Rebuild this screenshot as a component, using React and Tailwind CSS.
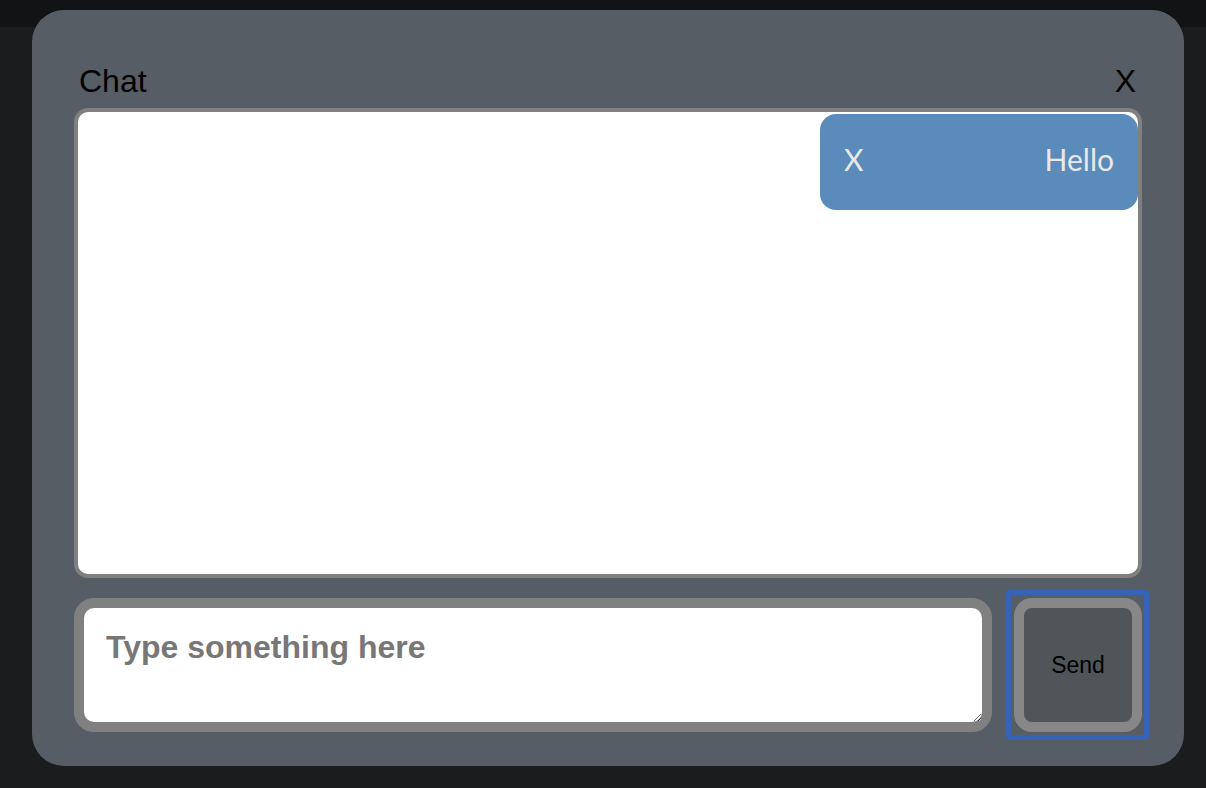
import { useState } from "react";

const Bubble = ({ text }) => (
    <div className="self-end mt-[2px] w-[318px] h-[96px] rounded-[16px] bg-[#5b8bbb] flex items-center justify-between pl-[24px] pr-[24px] pb-[5px] text-[#e8e8e8] text-[30px] font-['Lato',sans-serif]">
        <span>X</span>
        <span>{text}</span>
    </div>
);

export default function App() {
    const [message, setMessage] = useState("");

    return (
        <div className="relative w-full h-[788px] bg-[#1b1c1e] font-['Liberation_Sans',Arial,sans-serif]">
            <div className="h-[27px] bg-[#121315]" />

            {/* Modal */}
            <div className="absolute left-[32px] top-[10px] w-[1152px] h-[756px] rounded-[32px] bg-[#565d64] px-[42px] pt-[51px] flex flex-col">
                {/* Header */}
                <div className="h-[40px] leading-[40px] flex justify-between px-[5px] text-[32px] text-black">
                    <span>Chat</span>
                    <span className="mr-[1px]">X</span>
                </div>

                {/* Messages */}
                <div className="mt-[7px] h-[470px] rounded-[14px] border-[4px] border-[#808080] bg-white overflow-hidden flex flex-col">
                    <Bubble text="Hello" />
                </div>

                {/* Input */}
                <div className="mt-[20px] flex gap-[22px] h-[134px]">
                    <textarea
                        className="flex-1 h-full rounded-[20px] border-[10px] border-[#808080] bg-white pl-[22px] pt-[15px] text-[32px] font-semibold text-black placeholder:text-[#777777] outline-none"
                        placeholder="Type something here"
                        value={message}
                        onChange={(e) => setMessage(e.target.value)}
                    />
                    <button className="relative w-[128px] h-full rounded-[18px] border-[10px] border-[#878787] bg-[#4f5558] text-[23px] text-black">
                        <span className="absolute -top-[18px] -bottom-[18px] -left-[18px] -right-[17px] rounded-[4px] border-[5px] border-[#3563b5]" />
                        Send
                    </button>
                </div>
            </div>
        </div>
    );
}
